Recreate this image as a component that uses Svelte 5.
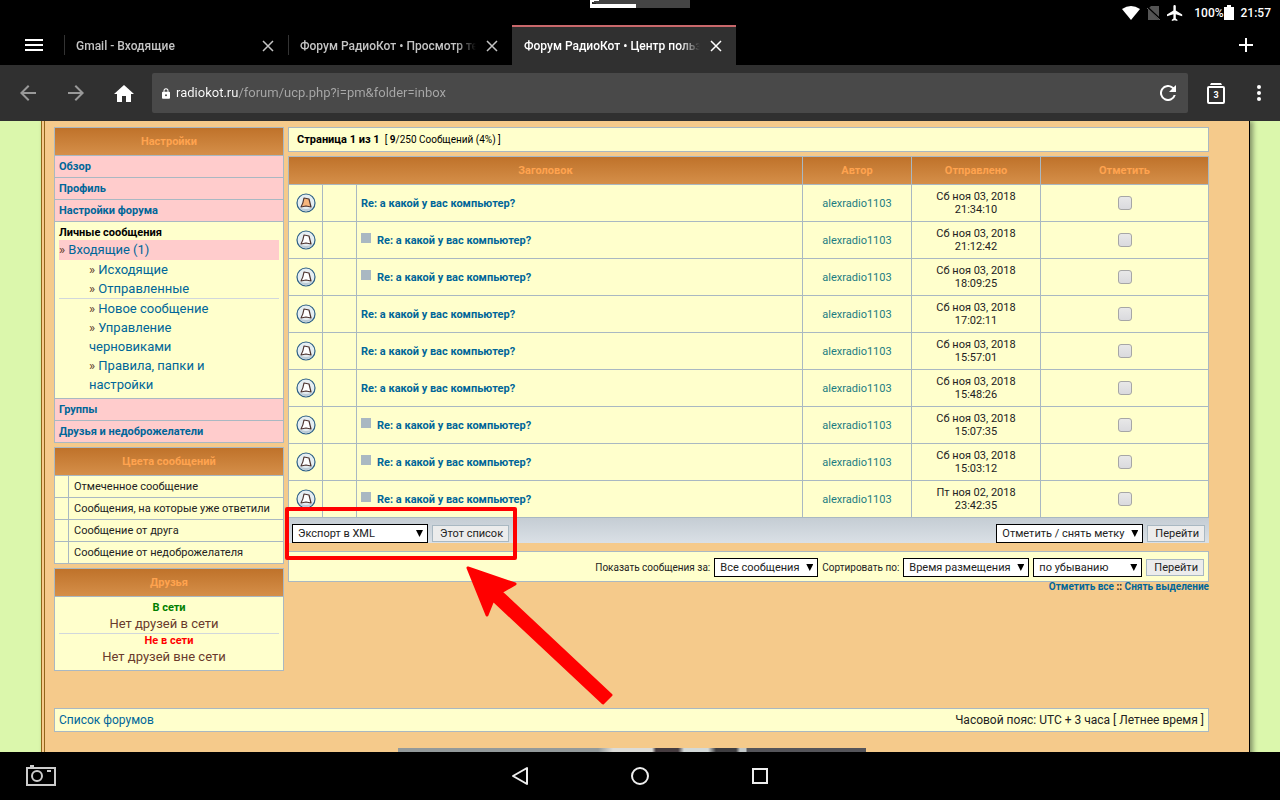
<script>
  const tabs = [
    { title: 'Gmail - Входящие', active: false },
    { title: 'Форум РадиоКот • Просмотр темы', active: false },
    { title: 'Форум РадиоКот • Центр пользователя', active: true }
  ];

  const sections = ['Обзор', 'Профиль', 'Настройки форума'];
  const sectionsBottom = ['Группы', 'Друзья и недоброжелатели'];
  const folders = ['Исходящие', 'Отправленные'];
  const actions = ['Новое сообщение', 'Управление черновиками', 'Правила, папки и настройки'];

  const legend = [
    'Отмеченное сообщение',
    'Сообщения, на которые уже ответили',
    'Сообщение от друга',
    'Сообщение от недоброжелателя'
  ];

  const subject = 'Re: а какой у вас компьютер?';
  const author = 'alexradio1103';

  let messages = $state([
    { date: 'Сб ноя 03, 2018', time: '21:34:10', unread: true, reply: false, marked: false },
    { date: 'Сб ноя 03, 2018', time: '21:12:42', unread: false, reply: true, marked: false },
    { date: 'Сб ноя 03, 2018', time: '18:09:25', unread: false, reply: true, marked: false },
    { date: 'Сб ноя 03, 2018', time: '17:02:11', unread: false, reply: false, marked: false },
    { date: 'Сб ноя 03, 2018', time: '15:57:01', unread: false, reply: false, marked: false },
    { date: 'Сб ноя 03, 2018', time: '15:48:26', unread: false, reply: false, marked: false },
    { date: 'Сб ноя 03, 2018', time: '15:07:35', unread: false, reply: true, marked: false },
    { date: 'Сб ноя 03, 2018', time: '15:03:12', unread: false, reply: true, marked: false },
    { date: 'Пт ноя 02, 2018', time: '23:42:35', unread: false, reply: true, marked: false }
  ]);

  let url = $state('radiokot.ru/forum/ucp.php?i=pm&folder=inbox');

  const markAll = (value) => (e) => {
    e.preventDefault();
    messages.forEach((m) => (m.marked = value));
  };
</script>

{#snippet dropdown(id, label, options)}
  <span class="select {id}">
    <select {id} aria-label={label}>
      {#each options as option}
        <option>{option}</option>
      {/each}
    </select>
    <span class="caret"></span>
  </span>
{/snippet}

<div class="screen">
  <header>
    <div class="status">
      <svg class="peek" width="100" height="8" viewBox="0 0 100 8">
        <path fill="#444" d="M0 0h100v8H0z" />
        <path fill="#fff" d="M0 0h9v1H4v1H3v2h43v4H0z" />
        <path fill="#222" d="M2 2h1v1h3v1H2z" />
      </svg>
      <svg width="18" height="14" viewBox="0 0 18 14"><path fill="#fff" d="M9 14 0 3Q9-3 18 3z" /></svg>
      <svg class="sim" width="13" height="14" viewBox="0 0 13 14">
        <path fill="#555" d="M4 0h8v14H1V3z" />
        <path stroke="#000" stroke-width="2" d="M0 1l13 12" />
        <path stroke="#666" d="M0 2l13 12" />
      </svg>
      <svg class="plane" width="16" height="16" viewBox="2 2 20 20">
        <path fill="#fff" d="M21 16v-2l-8-5V3.500a1.500 1.500 0 0 0-3 0V9l-8 5v2l8-2.500V19l-2 1.500V22l3.500-1 3.500 1v-1.500L13 19v-5.500z" />
      </svg>
      <span>100%</span>
      <svg width="10" height="15" viewBox="0 0 10 15"><path fill="#fff" d="M3 0h4v2h3v13H0V2h3z" /></svg>
      <span class="clock">21:57</span>
    </div>

    <div class="tabs">
      <button class="menu" aria-label="Меню">
        <svg width="18" height="12" viewBox="0 0 18 12"><path fill="#fff" d="M0 0h18v2H0zM0 5h18v2H0zM0 10h18v2H0z" /></svg>
      </button>
      {#each tabs as tab}
        <div class="tab" class:active={tab.active}>
          <span class="tab-title">{tab.title}</span>
          <button aria-label="Закрыть вкладку">
            <svg width="12" height="12" viewBox="0 0 12 12"><path stroke="currentColor" stroke-width="1.500" d="M1 1l10 10M11 1L1 11" /></svg>
          </button>
        </div>
      {/each}
      <button class="new-tab" aria-label="Новая вкладка">
        <svg width="14" height="14" viewBox="0 0 14 14"><path fill="#fff" d="M6 0h2v6h6v2H8v6H6V8H0V6h6z" /></svg>
      </button>
    </div>

    <div class="toolbar">
      <button aria-label="Назад">
        <svg width="16" height="16" viewBox="4 4 16 16"><path fill="#999" d="M20 11H7.830l5.590-5.590L12 4l-8 8 8 8 1.410-1.410L7.830 13H20z" /></svg>
      </button>
      <button aria-label="Вперёд">
        <svg width="16" height="16" viewBox="4 4 16 16"><path fill="#999" d="M12 4l-1.410 1.410L16.170 11H4v2h12.170l-5.580 5.590L12 20l8-8z" /></svg>
      </button>
      <button aria-label="Домой">
        <svg width="20" height="17" viewBox="2 3 20 17"><path fill="#fff" d="M10 20v-6h4v6h5v-8h3L12 3 2 12h3v8z" /></svg>
      </button>
      <div class="address">
        <svg width="8" height="11" viewBox="4 1 16 21"><path fill="#fff" d="M18 8h-1V6A5 5 0 0 0 7 6v2H6a2 2 0 0 0-2 2v10c0 1 1 2 2 2h12c1 0 2-1 2-2V10a2 2 0 0 0-2-2zm-6 9a2 2 0 1 1 0-4 2 2 0 0 1 0 4zM9 8V6a3 3 0 0 1 6 0v2z" /></svg>
        <input type="text" aria-label="Адрес" bind:value={url} />
        <button aria-label="Обновить">
          <svg width="16" height="16" viewBox="4 4 16 16"><path fill="#fff" d="M17.650 6.350A8 8 0 1 0 19.730 14h-2.080A6 6 0 1 1 12 6c1.660 0 3.140.690 4.220 1.780L13 11h7V4z" /></svg>
        </button>
      </div>
      <button aria-label="Вкладки">
        <svg width="18" height="21" viewBox="0 0 18 21">
          <path fill="#fff" d="M4 0h10l1 2H3z" />
          <rect x="1" y="4" width="16" height="16" rx="1" fill="none" stroke="#fff" stroke-width="2" />
          <text x="9" y="15" text-anchor="middle" fill="#fff" font-size="9" font-weight="700">3</text>
        </svg>
      </button>
      <button class="more" aria-label="Ещё">
        <svg width="4" height="16" viewBox="0 0 4 16"><circle cx="2" cy="2" r="2" fill="#fff" /><circle cx="2" cy="8" r="2" fill="#fff" /><circle cx="2" cy="14" r="2" fill="#fff" /></svg>
      </button>
    </div>
  </header>

  <main>
    <div class="page">
      <div class="columns">
        <aside>
          <table>
            <thead><tr><th>Настройки</th></tr></thead>
            <tbody>
              {#each sections as section}
                <tr><td class="section"><a href="#ucp">{section}</a></td></tr>
              {/each}
              <tr>
                <td class="folders">
                  <b>Личные сообщения</b>
                  <div class="current">» <a href="#inbox">Входящие (1)</a></div>
                  <ul>
                    {#each folders as folder}
                      <li>» <a href="#folder">{folder}</a></li>
                    {/each}
                  </ul>
                  <hr />
                  <ul>
                    {#each actions as action}
                      <li>» <a href="#action">{action}</a></li>
                    {/each}
                  </ul>
                </td>
              </tr>
              {#each sectionsBottom as section}
                <tr><td class="section"><a href="#ucp">{section}</a></td></tr>
              {/each}
            </tbody>
          </table>

          <table>
            <colgroup><col class="c-swatch" /><col /></colgroup>
            <thead><tr><th colspan="2">Цвета сообщений</th></tr></thead>
            <tbody>
              {#each legend as item}
                <tr>
                  <td></td>
                  <td class="legend">{item}</td>
                </tr>
              {/each}
            </tbody>
          </table>

          <table>
            <thead><tr><th>Друзья</th></tr></thead>
            <tbody>
              <tr>
                <td class="friends">
                  <b class="online">В сети</b>
                  <p>Нет друзей в сети</p>
                  <hr />
                  <b class="offline">Не в сети</b>
                  <p>Нет друзей вне сети</p>
                </td>
              </tr>
            </tbody>
          </table>
        </aside>

        <section>
          <div class="pager">
            <b>Страница 1 из 1</b>
            <span>[ <b>9</b>/250 Сообщений (4%) ]</span>
          </div>

          <table class="inbox">
            <colgroup>
              <col class="c-icon" /><col class="c-icon" /><col /><col class="c-author" /><col class="c-date" /><col class="c-mark" />
            </colgroup>
            <thead>
              <tr>
                <th colspan="3">Заголовок</th>
                <th>Автор</th>
                <th>Отправлено</th>
                <th>Отметить</th>
              </tr>
            </thead>
            <tbody>
              {#each messages as message}
                <tr>
                  <td>
                    <svg class="mail" width="20" height="20" viewBox="0 0 20 20">
                      <circle cx="10" cy="10" r="9" fill="#e6eef2" stroke="#2c5f86" stroke-width="1.200" />
                      <path d="M3 14q7 4 14 0a8 8 0 0 1-14 0z" fill="#bccbd6" />
                      <path d="M8 5l5 1 2 8-5-1-5 1q2-3 3-9z" fill={message.unread ? '#f6b57c' : '#fff'} stroke="#4d3430" stroke-width="1.200" stroke-linejoin="round" />
                    </svg>
                  </td>
                  <td></td>
                  <td class="title">
                    {#if message.reply}<i class="square"></i>{/if}<a href="#message">{subject}</a>
                  </td>
                  <td><a class="author" href="#author">{author}</a></td>
                  <td>{message.date}<br />{message.time}</td>
                  <td><input type="checkbox" aria-label="Отметить сообщение" bind:checked={message.marked} /></td>
                </tr>
              {/each}
            </tbody>
          </table>

          <div class="actions">
            {@render dropdown('export', 'Экспорт', ['Экспорт в XML', 'Экспорт в CSV'])}
            <button class="btn">Этот список</button>
            <span class="spacer"></span>
            {@render dropdown('mark', 'Действие', ['Отметить / снять метку', 'Удалить отмеченные'])}
            <button class="btn">Перейти</button>
          </div>

          <div class="filter">
            <label for="period">Показать сообщения за:</label>
            {@render dropdown('period', 'Показать сообщения за', ['Все сообщения', '1 день', '7 дней'])}
            <label for="sort">Сортировать по:</label>
            {@render dropdown('sort', 'Сортировать по', ['Время размещения', 'Автор', 'Заголовок'])}
            {@render dropdown('order', 'Порядок', ['по убыванию', 'по возрастанию'])}
            <button class="btn">Перейти</button>
          </div>

          <div class="mark-links">
            <a href="#all" onclick={markAll(true)}>Отметить все</a> ::
            <a href="#none" onclick={markAll(false)}>Снять выделение</a>
          </div>
        </section>
      </div>

      <footer>
        <a href="#index">Список форумов</a>
        <span>Часовой пояс: UTC + 3 часа [ Летнее время ]</span>
      </footer>

      <div class="banner"></div>

      <!-- red pointer over the export controls -->
      <svg class="pointer" width="340" height="210" viewBox="280 500 340 210">
        <rect x="287" y="509" width="228" height="49" fill="none" stroke="#f00" stroke-width="4" stroke-linejoin="round" />
        <path fill="#f00" stroke="#f00" stroke-width="3" stroke-linejoin="round" d="M468 568l47 16-14 8 110 103-8 8L493 600l-6 15z" />
      </svg>
    </div>
  </main>

  <nav>
    <button class="camera" aria-label="Снимок экрана">
      <svg width="30" height="22" viewBox="0 0 30 22" fill="none" stroke="#ccc">
        <path stroke-width="2" d="M1 3h28v17H1z" />
        <path d="M4 1h4" stroke-width="2" />
        <circle cx="11" cy="11" r="5" stroke-width="2" />
        <path d="M21 6h4" stroke-width="2" />
      </svg>
    </button>
    <div class="keys">
      <button aria-label="Назад">
        <svg width="18" height="20" viewBox="0 0 18 20"><path fill="none" stroke="#eee" stroke-width="2" stroke-linejoin="round" d="M16 2v16L2 10z" /></svg>
      </button>
      <button aria-label="Домой">
        <svg width="18" height="18" viewBox="0 0 18 18"><circle cx="9" cy="9" r="8" fill="none" stroke="#eee" stroke-width="2" /></svg>
      </button>
      <button aria-label="Недавние">
        <svg width="16" height="16" viewBox="0 0 16 16"><rect x="1" y="1" width="14" height="14" fill="none" stroke="#eee" stroke-width="2" /></svg>
      </button>
    </div>
  </nav>
</div>

<style>
  :global(body) {
    margin: 0;
    background: #000;
  }

  .screen {
    display: flex;
    flex-direction: column;
    height: 100vh;
    overflow: hidden;
    font-family: Roboto, "Noto Sans", sans-serif;
    font-size: 11px;
  }

  button {
    display: flex;
    align-items: center;
    justify-content: center;
    padding: 0;
    border: 0;
    background: none;
    color: inherit;
    font-family: inherit;
  }

  svg {
    display: block;
    flex: none;
  }

  header,
  nav {
    flex: none;
    background: #000;
    color: #fff;
  }

  .status {
    position: relative;
    display: flex;
    align-items: center;
    justify-content: flex-end;
    height: 25px;
    padding-right: 9px;
    font-size: 12px;
    font-weight: 500;
  }

  .peek {
    position: absolute;
    top: 0;
    left: calc(50% - 50px);
  }

  .sim {
    margin: 0 7px;
  }

  .plane {
    margin-right: 11px;
  }

  .clock {
    margin-left: 7px;
  }

  .tabs {
    display: flex;
    height: 40px;
  }

  .menu {
    width: 64px;
    padding-left: 4px;
  }

  .tab {
    display: flex;
    align-items: center;
    box-sizing: border-box;
    width: 224px;
    padding-left: 12px;
    border-top: 2px solid transparent;
    color: #c4c4c4;
    font-size: 12px;
    font-weight: 500;
    background: linear-gradient(#333, #333) 0 8px / 1px 20px no-repeat;
  }

  .tab.active {
    border-top-color: #c9686b;
    background: #303030;
    color: #fff;
  }

  .tab-title {
    flex: 1;
    margin-right: -4px;
    overflow: hidden;
    white-space: nowrap;
    mask-image: linear-gradient(90deg, #000 calc(100% - 20px), transparent);
  }

  .tab button {
    width: 40px;
    height: 36px;
  }

  .new-tab {
    width: 68px;
    margin-left: auto;
  }

  .toolbar {
    display: flex;
    align-items: center;
    height: 56px;
    padding: 0 2px 0 4px;
    background: #303030;
  }

  .toolbar button {
    width: 48px;
    height: 40px;
  }

  .toolbar .more {
    width: 38px;
  }

  .address {
    display: flex;
    flex: 1;
    align-items: center;
    height: 40px;
    margin: 0 4px;
    padding-left: 10px;
    border-radius: 2px;
    background: #494949;
  }

  .address input {
    flex: 1;
    min-width: 0;
    margin-left: 6px;
    padding: 0;
    border: 0;
    outline: 0;
    /* host part is brighter than the path */
    background: linear-gradient(90deg, #fff 62px, #a8a8a8 62px);
    background-clip: text;
    color: transparent;
    caret-color: #fff;
    font: 13px/20px Roboto, sans-serif;
  }

  .address button {
    width: 40px;
  }

  main {
    flex: 1;
    min-height: 0;
    overflow: hidden;
    background: #dbf7ac;
    color: #222;
  }

  .page {
    position: relative;
    box-sizing: border-box;
    min-height: 100%;
    margin: 0 30px 0 41px;
    padding: 6px 40px 0 9px;
    border-left: 4px double #91661a;
    border-right: 1px solid #000;
    background: #f5ca8b;
    box-shadow: 3px 0 5px rgba(0, 0, 0, 0.4);
  }

  .columns {
    display: flex;
    align-items: flex-start;
    gap: 4px;
  }

  aside {
    display: flex;
    flex: none;
    flex-direction: column;
    gap: 4px;
    width: 230px;
  }

  section {
    flex: 1;
    min-width: 0;
  }

  a {
    color: #006699;
    text-decoration: none;
  }

  table {
    width: 100%;
    border-spacing: 0;
    border-top: 1px solid #a9b8c2;
    border-left: 1px solid #a9b8c2;
    table-layout: fixed;
  }

  th,
  td {
    box-sizing: border-box;
    padding: 0 4px;
    border-right: 1px solid #a9b8c2;
    border-bottom: 1px solid #a9b8c2;
  }

  th {
    height: 28px;
    background: linear-gradient(#bf722a, #d58f49);
    color: #ffa34f;
  }

  td {
    height: 22px;
    background: #ffffcc;
  }

  td.section {
    background: #ffcccc;
    font-weight: 700;
  }

  td.folders {
    padding: 3px 4px 4px;
    color: #5c3a2a;
    font-size: 13px;
    line-height: 19px;
  }

  .folders b,
  .friends b {
    display: block;
    color: #000;
    font-size: 11px;
    line-height: 15px;
  }

  .current {
    padding-bottom: 1px;
    background: #ffcccc;
  }

  ul {
    margin: 0;
    padding: 0 40px 0 30px;
    list-style: none;
  }

  hr {
    height: 1px;
    margin: 0;
    border: 0;
    background: #d1d7dc;
  }

  .c-swatch {
    width: 14px;
  }

  .legend {
    padding-left: 5px;
    white-space: nowrap;
  }

  td.friends {
    padding: 4px;
    text-align: center;
  }

  .friends b {
    line-height: 13px;
  }

  .friends .online {
    color: green;
  }

  .friends .offline {
    color: red;
  }

  .friends p {
    margin: 0;
    padding-right: 10px;
    color: #693a2c;
    font-size: 13px;
    line-height: 19px;
  }

  .pager,
  .filter,
  footer {
    display: flex;
    align-items: center;
    box-sizing: border-box;
    border: 1px solid #a9b8c2;
    background: #ffffcc;
  }

  .pager {
    gap: 5px;
    height: 25px;
    margin-bottom: 4px;
    padding-left: 8px;
    color: #000;
  }

  .pager span {
    font-size: 10px;
  }

  .inbox td {
    height: 37px;
    line-height: 13px;
    text-align: center;
  }

  .inbox td.title {
    font-weight: 700;
    text-align: left;
  }

  .inbox .author {
    color: #1c7c82;
  }

  .c-icon {
    width: 34px;
  }

  .c-author {
    width: 109px;
  }

  .c-date {
    width: 129px;
  }

  .c-mark {
    width: 168px;
  }

  .mail {
    margin: 0 auto;
  }

  .square {
    display: inline-block;
    width: 10px;
    height: 10px;
    margin-right: 6px;
    background: #a9b8c2;
    vertical-align: 1px;
  }

  input[type='checkbox'] {
    display: block;
    appearance: none;
    width: 14px;
    height: 14px;
    margin: 0 auto;
    border: 1px solid #a6a6a6;
    border-radius: 3px;
    background: linear-gradient(#e8e8e8, #dadade);
  }

  input[type='checkbox']:checked {
    background: #5a7f9c;
  }

  .actions {
    display: flex;
    align-items: center;
    gap: 4px;
    box-sizing: border-box;
    height: 25px;
    padding: 6px 4px 0;
    background: linear-gradient(#c5cdd4, #dae0e6);
  }

  .spacer {
    flex: 1;
  }

  .select {
    position: relative;
    display: flex;
  }

  select {
    appearance: none;
    box-sizing: border-box;
    width: 100%;
    height: 19px;
    padding: 0 5px;
    border: 1px solid #000;
    border-radius: 0;
    background: #fff;
    color: #222;
    font: 11px/17px Roboto, sans-serif;
  }

  .caret {
    position: absolute;
    top: 6px;
    right: 5px;
    width: 7px;
    height: 7px;
    background: #000;
    clip-path: polygon(0 0, 100% 0, 50% 100%);
    pointer-events: none;
  }

  .export {
    width: 136px;
  }

  .mark {
    width: 147px;
  }

  .period {
    width: 104px;
  }

  .sort {
    width: 126px;
  }

  .order {
    width: 109px;
  }

  .btn {
    height: 17px;
    padding: 0 5px 0 7px;
    border: 1px solid #a9b8c2;
    background: #ececec;
    color: #222;
    font-size: 11px;
  }

  .filter {
    justify-content: flex-end;
    gap: 4px;
    height: 31px;
    margin-top: 8px;
    padding: 2px 4px 0;
  }

  .filter label {
    font-size: 10px;
  }

  .mark-links {
    font-size: 10px;
    font-weight: 700;
    line-height: 10px;
    text-align: right;
  }

  footer {
    justify-content: space-between;
    height: 24px;
    margin-top: 37px;
    padding: 0 4px;
    font-size: 12px;
  }

  .banner {
    width: 468px;
    height: 60px;
    margin: 16px auto 0;
    background: linear-gradient(90deg, #939a9b 0 200px, #dcdcd8 215px 254px, #463c40 258px 280px, #d3d9d8 286px 310px, #3e3d40 318px 338px, #c3c8c8 342px 348px, #55555a 349px);
  }

  .pointer {
    position: absolute;
    top: 379px;
    left: 235px;
    pointer-events: none;
  }

  nav {
    display: grid;
    grid-template-columns: 1fr auto 1fr;
    align-items: center;
    height: 48px;
  }

  .camera {
    justify-self: start;
    margin-left: 26px;
  }

  .keys {
    display: flex;
  }

  .keys button {
    width: 120px;
    height: 48px;
  }
</style>
